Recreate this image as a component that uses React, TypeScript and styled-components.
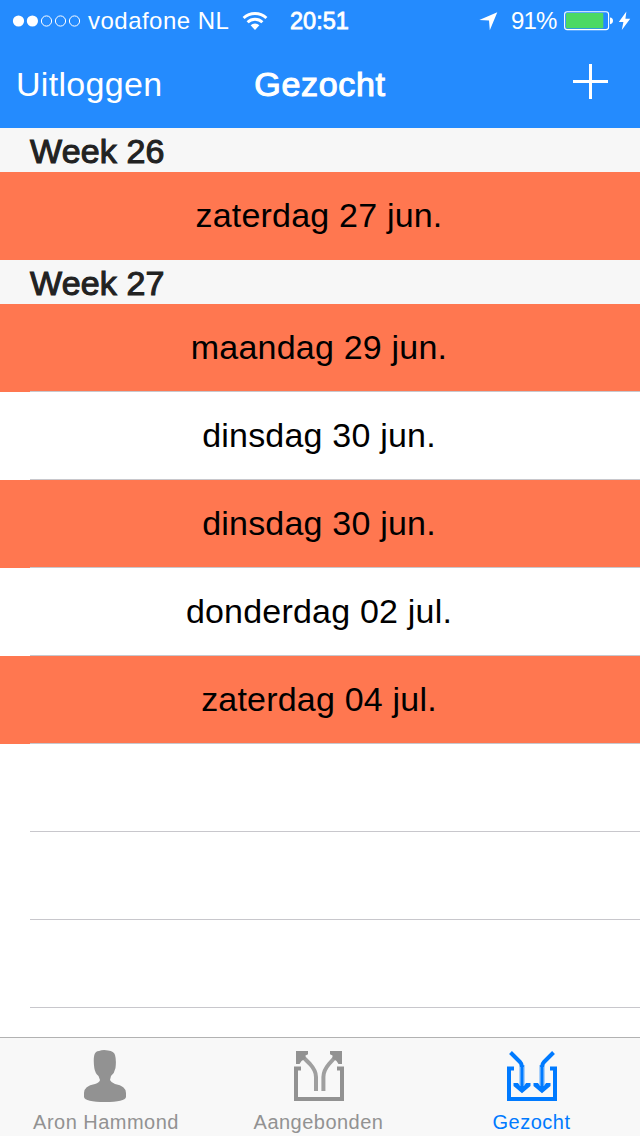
import React from 'react';
import styled, { createGlobalStyle, css } from 'styled-components';

const GlobalStyle = createGlobalStyle`
  * { box-sizing: border-box; }
  body {
    margin: 0;
    background: #fff;
    font-family: "Liberation Sans", Arial, sans-serif;
  }
  svg { display: block; flex: none; }
`;

/* Medium weight: the regular face thickened by a thin outline. */
const medium = css`
  font-weight: 400;
  -webkit-text-stroke: 1.1px currentColor;
`;

const Screen = styled.div`
  display: flex;
  flex-direction: column;
  width: 640px;
  height: 1136px;
  overflow: hidden;
  background: #fff;
`;

const Header = styled.header`
  flex: none;
  height: 128px;
  background: #248bfe;
  color: #fff;
`;

const StatusBar = styled.div`
  display: grid;
  grid-template-columns: 290px 1fr auto;
  align-items: center;
  height: 40px;
  padding: 2px 9px 0 0;
  font-size: 24px;
  line-height: 28px;
  white-space: nowrap;
`;

const Carrier = styled.div`
  display: flex;
  align-items: center;
  padding-left: 12px;
`;

const CarrierName = styled.span`
  width: 154px;
  margin-left: 7px;
  letter-spacing: 0.48px;
`;

const Clock = styled.span`
  ${medium}
  font-size: 23.5px;
  letter-spacing: 0;
  -webkit-text-stroke-width: 0.8px;
`;

const Power = styled.div`
  display: flex;
  align-items: center;
`;

const Percent = styled.span`
  width: 54px;
  margin-left: 13px;
  margin-right: -1px;
  letter-spacing: -0.8px;
`;

const NavBar = styled.nav`
  display: grid;
  grid-template-columns: 1fr auto 1fr;
  align-items: center;
  height: 88px;
  padding: 0 32px 0 16px;
  font-size: 34px;
  line-height: 40px;
`;

const NavButton = styled.button`
  justify-self: start;
  padding: 0;
  border: 0;
  background: none;
  color: inherit;
  font: inherit;
  letter-spacing: 0.3px;
`;

const AddButton = styled(NavButton)`
  justify-self: end;
  padding-bottom: 5px;
`;

const Title = styled.h1`
  margin: 0 0 0 16px;
  font-size: 34px;
  line-height: 40px;
  letter-spacing: 0.7px;
  ${medium}
`;

const List = styled.main`
  flex: 1;
  min-height: 0;
  overflow: hidden;
`;

const SectionTitle = styled.h2`
  height: 44px;
  margin: 0;
  padding: 3px 30px 0;
  background: #f7f7f7;
  color: #222;
  font-size: 34px;
  line-height: 41px;
  letter-spacing: 0.15px;
  ${medium}
`;

const Row = styled.div<{ $wanted?: boolean }>`
  height: 88px;
  padding-left: 30px;
  background: ${({ $wanted }) => ($wanted ? '#ff7750' : '#fff')};
`;

const RowBody = styled.div<{ $last?: boolean }>`
  height: 88px;
  padding-right: 32px;
  border-bottom: 1px solid ${({ $last }) => ($last ? 'transparent' : '#c8c7cc')};
  color: #000;
  font-size: 34px;
  line-height: 86px;
  letter-spacing: 0.2px;
  text-align: center;
`;

const TabBar = styled.footer`
  display: grid;
  grid-template-columns: 212px 213px 213px;
  flex: none;
  height: 99px;
  border-top: 1px solid #b2b2b2;
  background: #f8f8f8;
`;

const Tab = styled.div<{ $active?: boolean }>`
  display: flex;
  flex-direction: column;
  align-items: center;
  padding-top: 12px;
  color: ${({ $active }) => ($active ? '#007aff' : '#929292')};
`;

const TabLabel = styled.span`
  margin-top: 8px;
  font-size: 20px;
  line-height: 24px;
  letter-spacing: 0.48px;
`;

const SignalDots = () => (
  <svg width="69" height="12" viewBox="0 0 69 12">
    {[6.5, 20.4, 34.5, 48.5, 62.5].map((cx, i) => (
      <circle
        key={cx}
        cx={cx}
        cy="6"
        r={i < 2 ? 5.6 : 5.1}
        fill={i < 2 ? '#fff' : 'none'}
        stroke={i < 2 ? 'none' : '#fff'}
        strokeWidth="1"
      />
    ))}
  </svg>
);

const Wifi = () => (
  <svg width="26" height="20" viewBox="0 0 26 20">
    <g fill="none" stroke="#fff" strokeWidth="2.9">
      <path d="M1.6 7A16.6 16.6 0 0 1 24.4 7" />
      <path d="M5.6 11.2A10.7 10.7 0 0 1 20.4 11.2" />
    </g>
    <path d="M8.6 14.3A6.3 6.3 0 0 1 17.4 14.3L13 18.9Z" fill="#fff" />
  </svg>
);

const LocationArrow = () => (
  <svg width="19" height="19" viewBox="0 0 19 19">
    <path d="M18.3 .3L10.8 18.2L10 8.5L.3 8Z" fill="#fff" />
  </svg>
);

const Battery = () => (
  <svg width="54" height="20" viewBox="0 0 54 20">
    <rect x=".6" y=".8" width="44" height="17.8" rx="2.6" fill="none" stroke="#fff" strokeWidth="1.1" />
    <rect x="2" y="2" width="37.3" height="15.2" rx=".8" fill="#4cd964" />
    <path d="M46 6.5Q49 6.8 49 9.8Q49 12.8 46 13.2Z" fill="#fff" />
  </svg>
);

const Bolt = () => (
  <svg width="13" height="20" viewBox="0 0 13 20">
    <path d="M8.4 .6L.8 11H5.4L3.8 19L12.2 7.8H7.4Z" fill="#fff" />
  </svg>
);

const Plus = () => (
  <svg width="35" height="35" viewBox="0 0 35 35" shapeRendering="crispEdges">
    <path d="M16 0h3v16h16v3H19v16h-3V19H0v-3h16Z" fill="#fff" />
  </svg>
);

const Person = () => (
  <svg width="46" height="52" viewBox="0 0 46 52" fill="currentColor">
    <path d="M16 1Q20-.5 25 .5Q31 1 32 5Q33.5 10 32.5 18Q31.5 23 28 26L27 30Q28 32.5 32 34Q43 36 43 43V47Q42 52 22 52Q2 52 1 47V43Q1 36 12 34Q16.5 32.5 17 30L15.5 26Q12 23 11.3 18Q10.2 10 11.3 5Q12.5 1 16 1Z" />
  </svg>
);

const Tray = () => (
  <path d="M8 18.6H3V49H49V18.6H44" fill="none" stroke="currentColor" strokeWidth="4" />
);

const Outgoing = () => (
  <svg width="52" height="52" viewBox="0 0 52 52">
    <Tray />
    <g fill="none" stroke="currentColor" strokeWidth="4">
      <path d="M7 4L17 14Q23 20.5 23 27V41" opacity=".88" />
      <path d="M45 4L36 14Q30.4 20.5 30.4 27V41" opacity=".88" />
    </g>
    <path d="M3 1H15V4.2L12.5 5.5V8.5L8.5 11L6.5 14H3ZM49 1H37V4.2L39.5 5.5V8.5L43.5 11L45.5 14H49Z" fill="currentColor" />
  </svg>
);

const Incoming = () => (
  <svg width="52" height="52" viewBox="0 0 52 52">
    <Tray />
    <g fill="none" stroke="currentColor">
      <path d="M4.5 2.5L14 12Q16 14 16 17M47.5 2.5L38 12Q36 14 36 17" strokeWidth="4" />
      <path d="M16 15V38M36 15V38" strokeWidth="5" opacity=".62" />
      <path d="M16 15V38M36 15V38" strokeWidth="2.2" />
    </g>
    <path
      d="M7.5 33H12L14 36H18L20 33H24.5V36L16 43.2L7.5 36ZM27.5 33H32L34 36H38L40 33H44.5V36L36 43.2L27.5 36Z"
      fill="currentColor"
    />
  </svg>
);

type Entry = { label: string; wanted: boolean };

const weeks: { title: string; days: Entry[] }[] = [
  { title: 'Week 26', days: [{ label: 'zaterdag 27 jun.', wanted: true }] },
  {
    title: 'Week 27',
    days: [
      { label: 'maandag 29 jun.', wanted: true },
      { label: 'dinsdag 30 jun.', wanted: false },
      { label: 'dinsdag 30 jun.', wanted: true },
      { label: 'donderdag 02 jul.', wanted: false },
      { label: 'zaterdag 04 jul.', wanted: true },
    ],
  },
];

export default function App() {
  return (
    <Screen>
      <GlobalStyle />
      <Header>
        <StatusBar>
          <Carrier>
            <SignalDots />
            <CarrierName>vodafone NL</CarrierName>
            <Wifi />
          </Carrier>
          <Clock>20:51</Clock>
          <Power>
            <LocationArrow />
            <Percent>91%</Percent>
            <Battery />
            <Bolt />
          </Power>
        </StatusBar>
        <NavBar>
          <NavButton>Uitloggen</NavButton>
          <Title>Gezocht</Title>
          <AddButton aria-label="Toevoegen">
            <Plus />
          </AddButton>
        </NavBar>
      </Header>
      <List>
        {weeks.map((week, w) => (
          <section key={week.title}>
            <SectionTitle>{week.title}</SectionTitle>
            {week.days.map((day, i) => (
              <Row key={i} $wanted={day.wanted}>
                <RowBody $last={w < weeks.length - 1 && i === week.days.length - 1}>
                  {day.label}
                </RowBody>
              </Row>
            ))}
          </section>
        ))}
        {[0, 1, 2].map((i) => (
          <Row key={i}>
            <RowBody />
          </Row>
        ))}
      </List>
      <TabBar>
        <Tab>
          <Person />
          <TabLabel>Aron Hammond</TabLabel>
        </Tab>
        <Tab>
          <Outgoing />
          <TabLabel>Aangebonden</TabLabel>
        </Tab>
        <Tab $active>
          <Incoming />
          <TabLabel>Gezocht</TabLabel>
        </Tab>
      </TabBar>
    </Screen>
  );
}
